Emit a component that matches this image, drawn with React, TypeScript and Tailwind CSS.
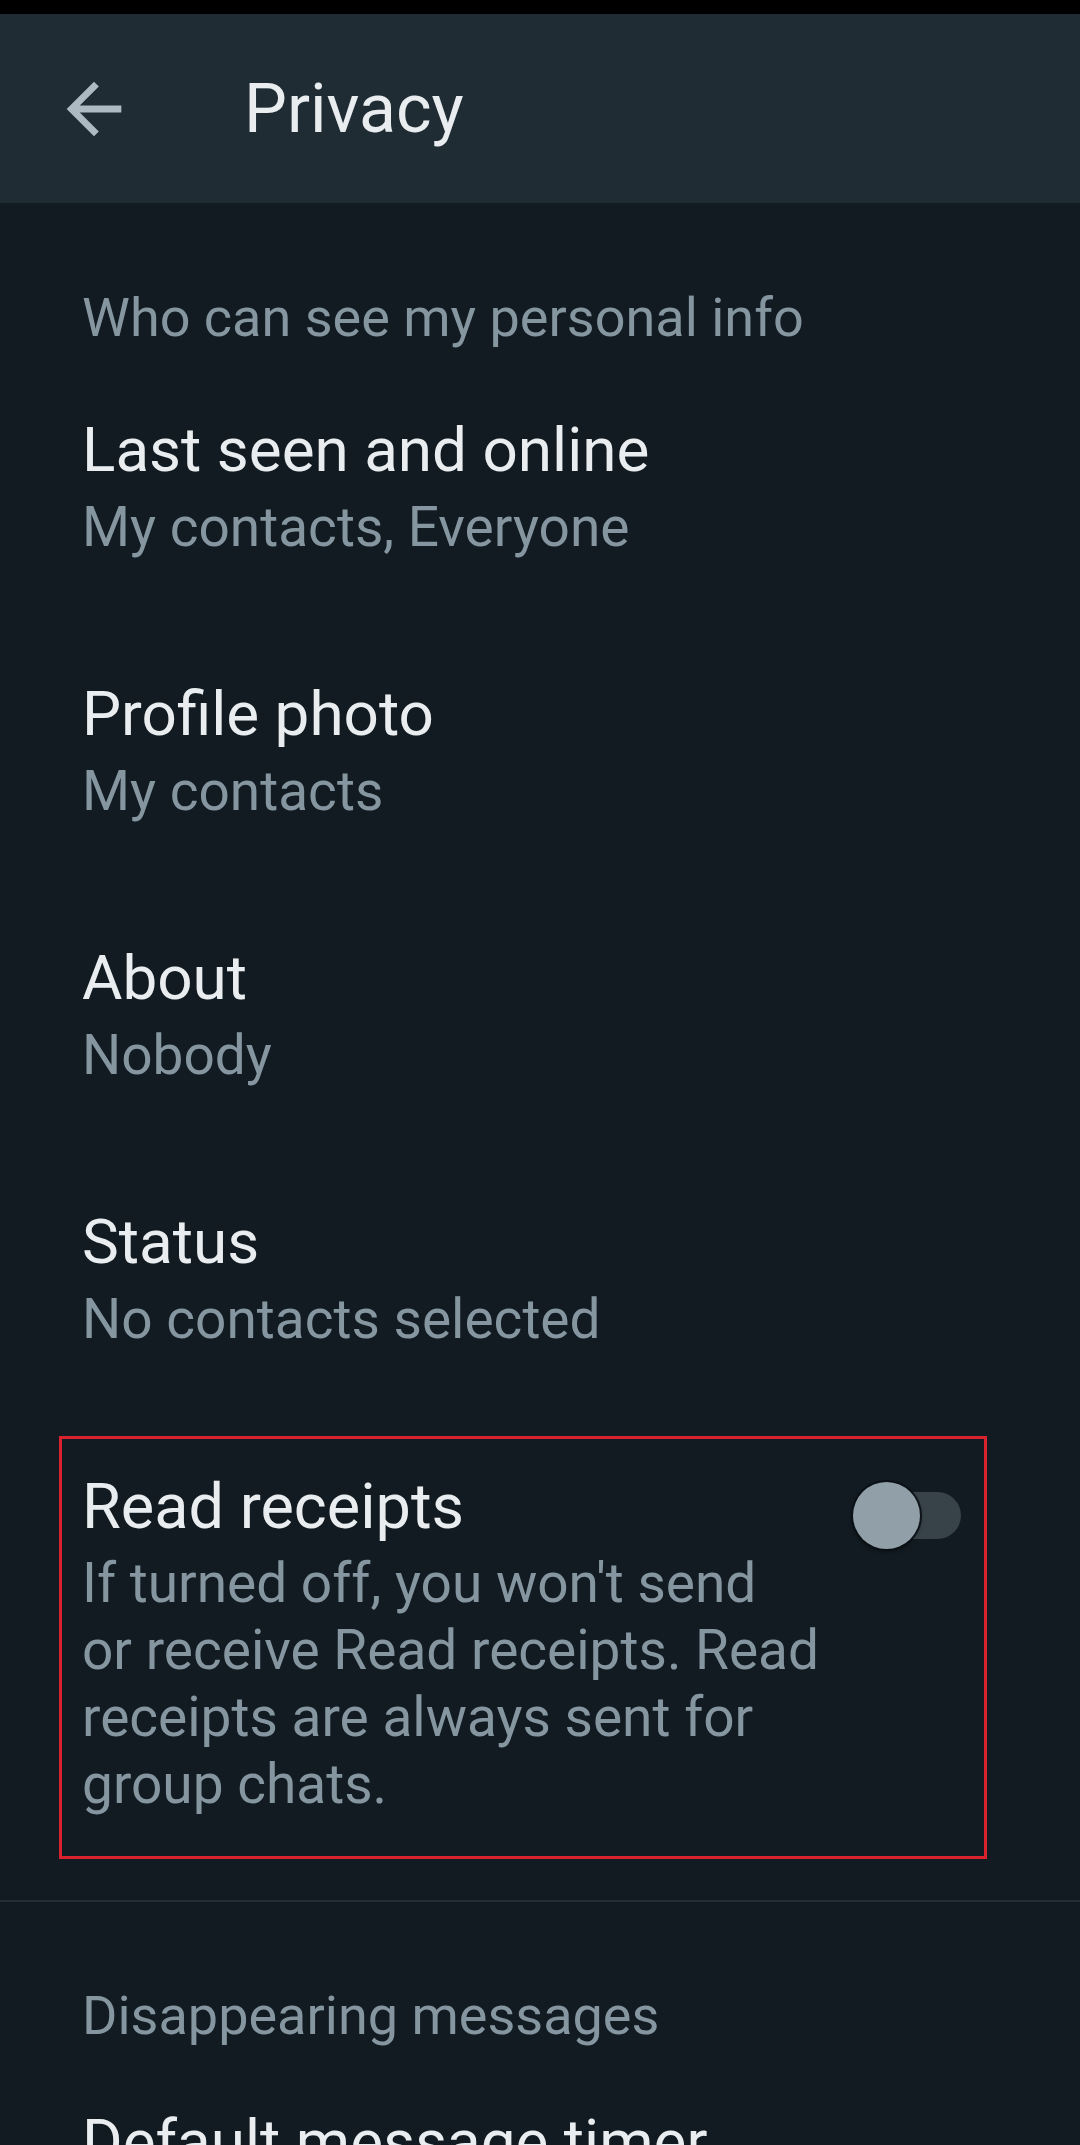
import React from "react";

type Item = { title: string; value: string };

const items: Item[] = [
  { title: "Last seen and online", value: "My contacts, Everyone" },
  { title: "Profile photo", value: "My contacts" },
  { title: "About", value: "Nobody" },
  { title: "Status", value: "No contacts selected" },
];

function BackArrow() {
  return (
    <svg width="82" height="82" viewBox="0 0 24 24" fill="#aebac1" aria-hidden="true">
      <path d="M20 11H7.83l5.59-5.59L12 4l-8 8 8 8 1.41-1.41L7.83 13H20v-2z" />
    </svg>
  );
}

function SettingRow({ title, value }: Item) {
  return (
    <div className="pl-[82px] pt-[59px] pb-[59px]">
      <div className="text-[62px] leading-[72px] text-[#e9edef]">{title}</div>
      <div className="mt-[8px] text-[55px] leading-[66px] text-[#8696a0]">{value}</div>
    </div>
  );
}

function Toggle() {
  return (
    <div className="relative w-[108px] h-[67px] shrink-0">
      <div className="absolute right-0 top-[10px] w-[95px] h-[47px] rounded-full bg-[#374249]" />
      <div className="absolute left-0 top-0 w-[67px] h-[67px] rounded-full bg-[#919fa8] shadow-[0_0_0_2px_rgba(10,16,20,0.9),0_2px_4px_rgba(0,0,0,0.5)]" />
    </div>
  );
}

export default function App() {
  return (
    <div className="w-[1080px] h-[2145px] overflow-hidden bg-[#111b21] font-['Roboto',sans-serif]">
      <div className="h-[14px] bg-black" />
      <header className="h-[189px] bg-[#202c33] flex items-center">
        <div className="ml-[53px] w-[82px] h-[82px] flex items-center justify-center">
          <BackArrow />
        </div>
        <h1 className="ml-[109px] text-[68px] leading-[80px] text-[#e9edef] font-normal">Privacy</h1>
      </header>

      <div className="pl-[82px] pt-[82px] mb-[4px] text-[54px] leading-[66px] text-[#8696a0]">
        Who can see my personal info
      </div>

      {items.map((it) => (
        <SettingRow key={it.title} {...it} />
      ))}

      <div className="mt-[25px] ml-[59px] w-[928px] h-[423px] border-[3px] border-[#d8232f] flex justify-between pl-[20px] pr-[23px] pt-[32px]">
        <div>
          <div className="text-[63px] leading-[72px] text-[#e9edef]">Read receipts</div>
          <div className="mt-[7px] text-[55px] leading-[67px] text-[#8696a0]">
            If turned off, you won't send
            <br />
            or receive Read receipts. Read
            <br />
            receipts are always sent for
            <br />
            group chats.
          </div>
        </div>
        <div className="pt-[11px]">
          <Toggle />
        </div>
      </div>

      <div className="mt-[41px] h-[2px] bg-[#222d34]" />

      <div className="pl-[82px] pt-[81px] text-[54px] leading-[66px] text-[#8696a0]">
        Disappearing messages
      </div>
      <div className="pl-[82px] pt-[57px]">
        <div className="text-[62px] leading-[72px] text-[#e9edef]">Default message timer</div>
      </div>
    </div>
  );
}
